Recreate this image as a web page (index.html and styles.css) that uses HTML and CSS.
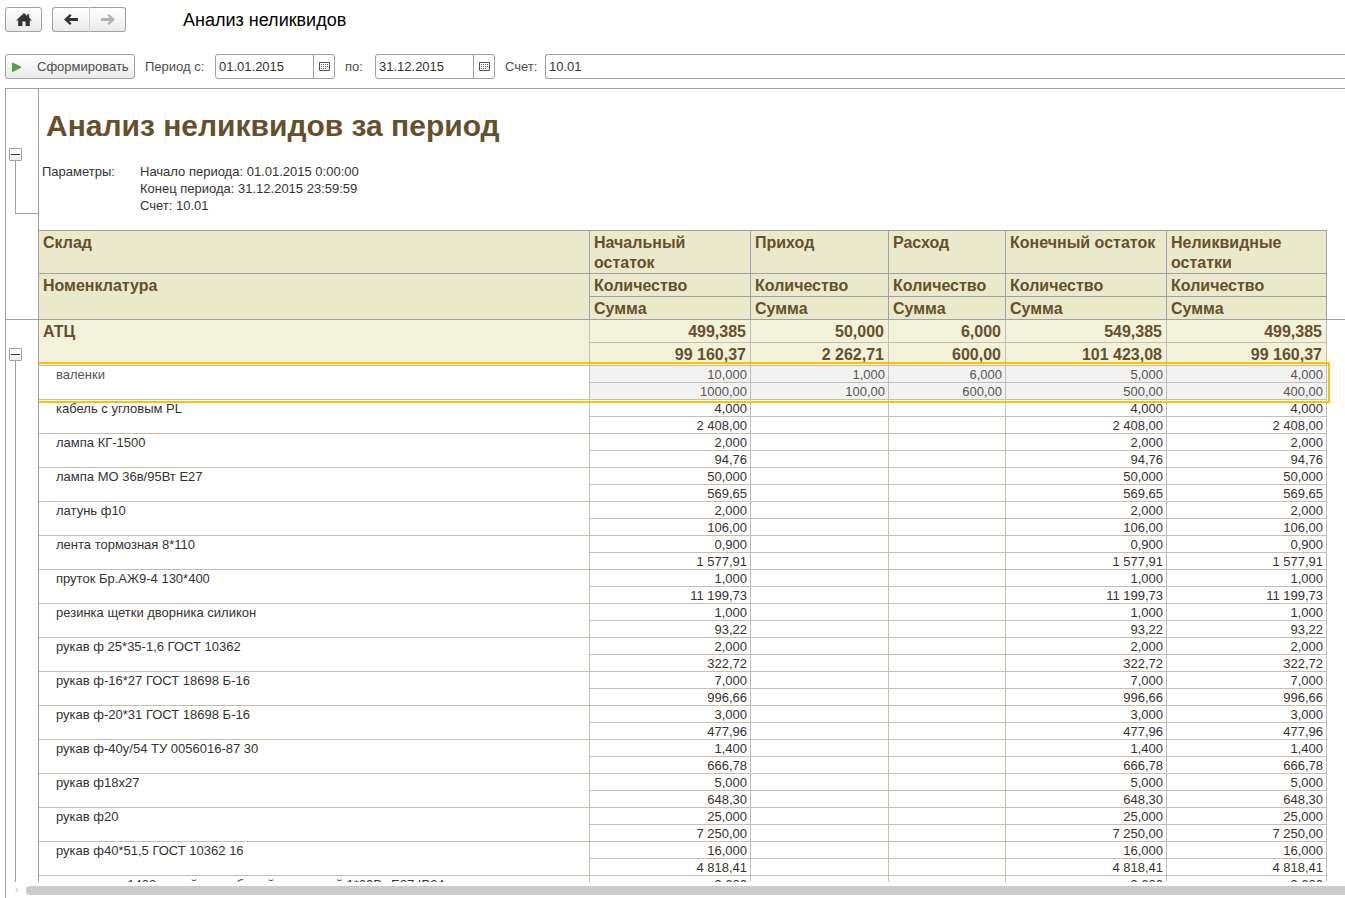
FILE: index.html
```html
<!DOCTYPE html>
<html lang="ru">
<head>
<meta charset="utf-8">
<title>Анализ неликвидов</title>
<link rel="stylesheet" href="styles.css">
</head>
<body>
<header class="topbar">
  <button class="btn home" type="button" aria-label="Домой"><svg width="16" height="14" viewBox="0 0 16 14"><path d="M8 0 0 7.4h2.2V13h4.2V8.6h3.2V13h4.2V7.4H16L13.2 4.8V1.2h-2v1.8z" fill="#333"/></svg></button>
  <div class="history">
    <button class="btn back" type="button" aria-label="Назад"><svg width="14" height="11" viewBox="0 0 14 11"><path d="M14 4H5.2L7.6 1.6 6 0 0 5.5 6 11l1.6-1.6L5.2 7H14z" fill="#333"/></svg></button>
    <button class="btn forward" type="button" aria-label="Вперед" disabled><svg width="14" height="11" viewBox="0 0 14 11"><path d="M0 4h8.8L6.4 1.6 8 0l6 5.5L8 11 6.4 9.4 8.8 7H0z" fill="#b2b2b2"/></svg></button>
  </div>
  <h1 class="page-title">Анализ неликвидов</h1>
</header>
<form class="filters">
  <button class="btn run" type="button"><svg width="10" height="10" viewBox="0 0 10 10"><path d="M.5 1v8.5L9 5.2z" fill="#46b02c" stroke="#5f8f55"/></svg><span>Сформировать</span></button>
  <label class="label label-from" for="from">Период с:</label>
  <div class="date"><input id="from" type="text" value="01.01.2015"><button type="button" aria-label="Выбрать дату"><svg width="11" height="9" viewBox="0 0 11 9"><path d="M.5.5h10v8H.5z" fill="none" stroke="#555"/><path d="M2 2.5h7M2 4.5h7M2 6.5h5" stroke="#555" stroke-dasharray="1 1"/></svg></button></div>
  <label class="label label-to" for="to">по:</label>
  <div class="date"><input id="to" type="text" value="31.12.2015"><button type="button" aria-label="Выбрать дату"><svg width="11" height="9" viewBox="0 0 11 9"><path d="M.5.5h10v8H.5z" fill="none" stroke="#555"/><path d="M2 2.5h7M2 4.5h7M2 6.5h5" stroke="#555" stroke-dasharray="1 1"/></svg></button></div>
  <label class="label label-account" for="account">Счет:</label>
  <input class="account" id="account" type="text" value="10.01">
</form>
<main class="sheet">
  <div class="viewport">
    <section class="intro">
      <div class="gutter"><button class="toggle" type="button" aria-label="Свернуть"></button><div class="bracket"></div></div>
      <div class="summary">
        <h2 class="report-title">Анализ неликвидов за период</h2>
        <dl class="params"><dt>Параметры:</dt><dd>Начало периода: 01.01.2015 0:00:00</dd><dd>Конец периода: 31.12.2015 23:59:59</dd><dd>Счет: 10.01</dd></dl>
      </div>
    </section>
    <table class="report" id="report">
      <colgroup><col class="c-gutter"><col class="c-name"><col class="c-wide"><col class="c-in"><col class="c-out"><col class="c-wide"><col class="c-last"><col></colgroup>
      <thead>
        <tr class="groups"><td class="rail" rowspan="3"></td><th>Склад</th><th>Начальный остаток</th><th>Приход</th><th>Расход</th><th>Конечный остаток</th><th>Неликвидные остатки</th><td class="rest" rowspan="3"></td></tr>
        <tr><th rowspan="2">Номенклатура</th><th>Количество</th><th>Количество</th><th>Количество</th><th>Количество</th><th>Количество</th></tr>
        <tr><th>Сумма</th><th>Сумма</th><th>Сумма</th><th>Сумма</th><th>Сумма</th></tr>
      </thead>
      <tbody class="total">
        <tr><td class="rail" rowspan="2"><div class="fold"><button class="toggle" type="button" aria-label="Свернуть"></button><div class="stem"></div></div></td><th rowspan="2">АТЦ</th><td>499,385</td><td>50,000</td><td>6,000</td><td>549,385</td><td>499,385</td></tr>
        <tr><td>99 160,37</td><td>2 262,71</td><td>600,00</td><td>101 423,08</td><td>99 160,37</td></tr>
      </tbody>
    </table>
  </div>
  <div class="scrollbar"><svg width="3" height="6" viewBox="0 0 3 6"><path d="M3 0v6L0 3z" fill="#ddd"/></svg><div class="thumb"></div></div>
</main>
<script src="report.js"></script>
</body>
</html>
```
FILE: report.js
```js
const items = [
  ["валенки", ["10,000", "1,000", "6,000", "5,000", "4,000"], ["1000,00", "100,00", "600,00", "500,00", "400,00"]],
  ["кабель с угловым PL", "4,000", "2 408,00"],
  ["лампа КГ-1500", "2,000", "94,76"],
  ["лампа МО 36в/95Вт Е27", "50,000", "569,65"],
  ["латунь ф10", "2,000", "106,00"],
  ["лента тормозная 8*110", "0,900", "1 577,91"],
  ["пруток Бр.АЖ9-4 130*400", "1,000", "11 199,73"],
  ["резинка щетки дворника силикон", "1,000", "93,22"],
  ["рукав ф 25*35-1,6 ГОСТ 10362", "2,000", "322,72"],
  ["рукав ф-16*27 ГОСТ 18698 Б-16", "7,000", "996,66"],
  ["рукав ф-20*31 ГОСТ 18698 Б-16", "3,000", "477,96"],
  ["рукав ф-40у/54 ТУ 0056016-87 30", "1,400", "666,78"],
  ["рукав ф18х27", "5,000", "648,30"],
  ["рукав ф20", "25,000", "7 250,00"],
  ["рукав ф40*51,5 ГОСТ 10362 16", "16,000", "4 818,41"],
  ["светильник 1402 серый накл. белый настенный 1*60Вт Е27 IP24", "9,000", "2 250,00"]
];

// A single figure means no movement: only the balance columns are filled.
const spread = v => Array.isArray(v) ? v : [v, "", "", v, v];
const cells = v => spread(v).map(t => `<td>${t}</td>`).join("");

const report = document.getElementById("report");
items.forEach(([name, quantity, sum], i) => {
  const group = document.createElement("tbody");
  group.className = i === 0 ? "item selected" : "item";
  group.innerHTML =
    `<tr><td class="rail" rowspan="2"><div class="stem"></div></td><th rowspan="2">${name}</th>${cells(quantity)}</tr>` +
    `<tr>${cells(sum)}</tr>`;
  report.append(group);
});
```
FILE: styles.css
```css
* { box-sizing: border-box; }

body {
  margin: 0;
  padding-left: 5px;
  height: 100vh;
  display: flex;
  flex-direction: column;
  overflow: hidden;
  background: #fff;
  color: #333;
  font: 13px/17px "Liberation Sans", Arial, sans-serif;
}

svg { display: block; flex: none; }
button, input { font: inherit; color: inherit; margin: 0; }

.topbar {
  display: flex;
  align-items: flex-start;
  padding-top: 7px;
}

.btn {
  display: flex;
  align-items: center;
  justify-content: center;
  height: 25px;
  width: 37px;
  padding: 0;
  border: 1px solid #a0a0a0;
  border-radius: 3px;
  background: linear-gradient(#fff, #ebebeb);
}

.history { display: flex; margin-left: 10px; }
.back { width: 38px; border-radius: 3px 0 0 3px; border-right-color: #ccc; }
.forward { border-left: 0; border-radius: 0 3px 3px 0; width: 36px; }

.page-title {
  margin: 0 0 0 57px;
  font-size: 18px;
  line-height: 27px;
  font-weight: normal;
  color: #000;
}

.filters {
  display: flex;
  align-items: center;
  margin-top: 20px;
}

.run {
  width: 130px;
  justify-content: flex-start;
  gap: 15px;
  padding-left: 6px;
  color: #4d4d4d;
}

.label {
  flex: none;
  padding-left: 10px;
  color: #4d4d4d;
  white-space: nowrap;
}
.label-from { width: 80px; }
.label-to { width: 40px; }
.label-account { width: 50px; }

.date {
  display: flex;
  flex: none;
  width: 120px;
  height: 25px;
  border: 1px solid #a0a0a0;
  border-radius: 3px;
}
.date input {
  flex: 1;
  min-width: 0;
  padding: 0 3px;
  border: 0;
  background: none;
}
.date button {
  display: flex;
  align-items: center;
  justify-content: center;
  width: 21px;
  padding: 0;
  border: 0;
  border-left: 1px solid #a0a0a0;
  background: none;
}

.account {
  flex: 1;
  min-width: 0;
  height: 25px;
  padding: 0 3px;
  border: 1px solid #a0a0a0;
  border-right: 0;
  border-radius: 3px 0 0 3px;
}

.sheet {
  flex: 1;
  min-height: 0;
  display: flex;
  flex-direction: column;
  margin-top: 9px;
  border: solid #a0a0a0;
  border-width: 1px 0 0 1px;
}
.viewport { flex: 1; min-height: 0; overflow: hidden; }

.intro { display: flex; }
.gutter {
  width: 33px;
  padding: 59px 0 16px 3px;
  border-right: 1px solid #a0a0a0;
  display: flex;
  flex-direction: column;
}
.toggle {
  display: flex;
  align-items: center;
  justify-content: center;
  flex: none;
  width: 13px;
  height: 13px;
  padding: 0;
  border: 1px solid #a0a0a0;
  border-radius: 1px;
  background: linear-gradient(#fff, #eee);
}
.toggle::before { content: ""; width: 9px; height: 1px; background: #333; }
.bracket {
  flex: 1;
  margin-left: 6px;
  border: solid #a0a0a0;
  border-width: 0 0 1px 1px;
}

.summary { padding: 16px 3px; }
.report-title {
  margin: 0 0 16px 4px;
  font-size: 30px;
  line-height: 42px;
  color: #66502c;
}
.params {
  display: grid;
  grid-template-columns: 98px auto;
  margin: 0;
}
.params dd { grid-column: 2; margin: 0; }

.report {
  width: 100%;
  table-layout: fixed;
  border-collapse: separate;
  border-spacing: 0;
}
.c-gutter { width: 33px; }
.c-name { width: 551px; }
.c-wide { width: 161px; }
.c-in { width: 138px; }
.c-out { width: 117px; }
.c-last { width: 160px; }

.report th, .report td {
  padding: 2px 3px 0;
  border: solid #c8beaf;
  border-width: 0 1px 1px 0;
  text-align: right;
  vertical-align: top;
}
.report th { text-align: left; }

.report thead th {
  padding: 2px 4px 0;
  border-color: #a0a0a0;
  background: #ebe9cb;
  color: #66502c;
  font-size: 16px;
  line-height: 20px;
}
.report .groups th { border-top-width: 1px; }

.report .rail {
  height: 1px;
  padding: 0;
  border-color: #a0a0a0;
  border-width: 0 1px 0 0;
}
.report thead .rail { border-bottom-width: 1px; }
.report .rest { border-color: #a0a0a0; border-width: 0 0 1px; }

.total th, .total td {
  background: #f2f1da;
  color: #66502c;
  font-size: 16px;
  line-height: 20px;
  font-weight: bold;
}
.report .total th, .report .total td { padding: 2px 4px 0; }
.report .total .rail { padding: 0; background: none; }
.fold {
  display: flex;
  flex-direction: column;
  height: 46px;
  padding: 28px 0 0 3px;
}
.stem {
  height: 34px;
  margin-left: 9px;
  border-left: 1px solid #a0a0a0;
}
.fold .stem { flex: 1; height: auto; margin-left: 6px; }

.item td, .item th { line-height: 14px; font-weight: normal; }
.item td { height: 17px; }
.report .item th {
  padding-left: 17px;
  white-space: nowrap;
}

.selected { position: relative; color: #555; }
.selected td:not(.rail) { background: #f2f2f2; }
.selected::after {
  content: "";
  position: absolute;
  top: -4px;
  bottom: -3px;
  left: 33px;
  width: 1289px;
  border: 2px solid #fbc200;
  border-left: 0;
  pointer-events: none;
}

.scrollbar {
  display: flex;
  align-items: center;
  gap: 8px;
  height: 16px;
  padding-left: 9px;
}
.thumb {
  flex: 1;
  height: 9px;
  border-radius: 4px 0 0 4px;
  background: #cbcbcb;
}
```
